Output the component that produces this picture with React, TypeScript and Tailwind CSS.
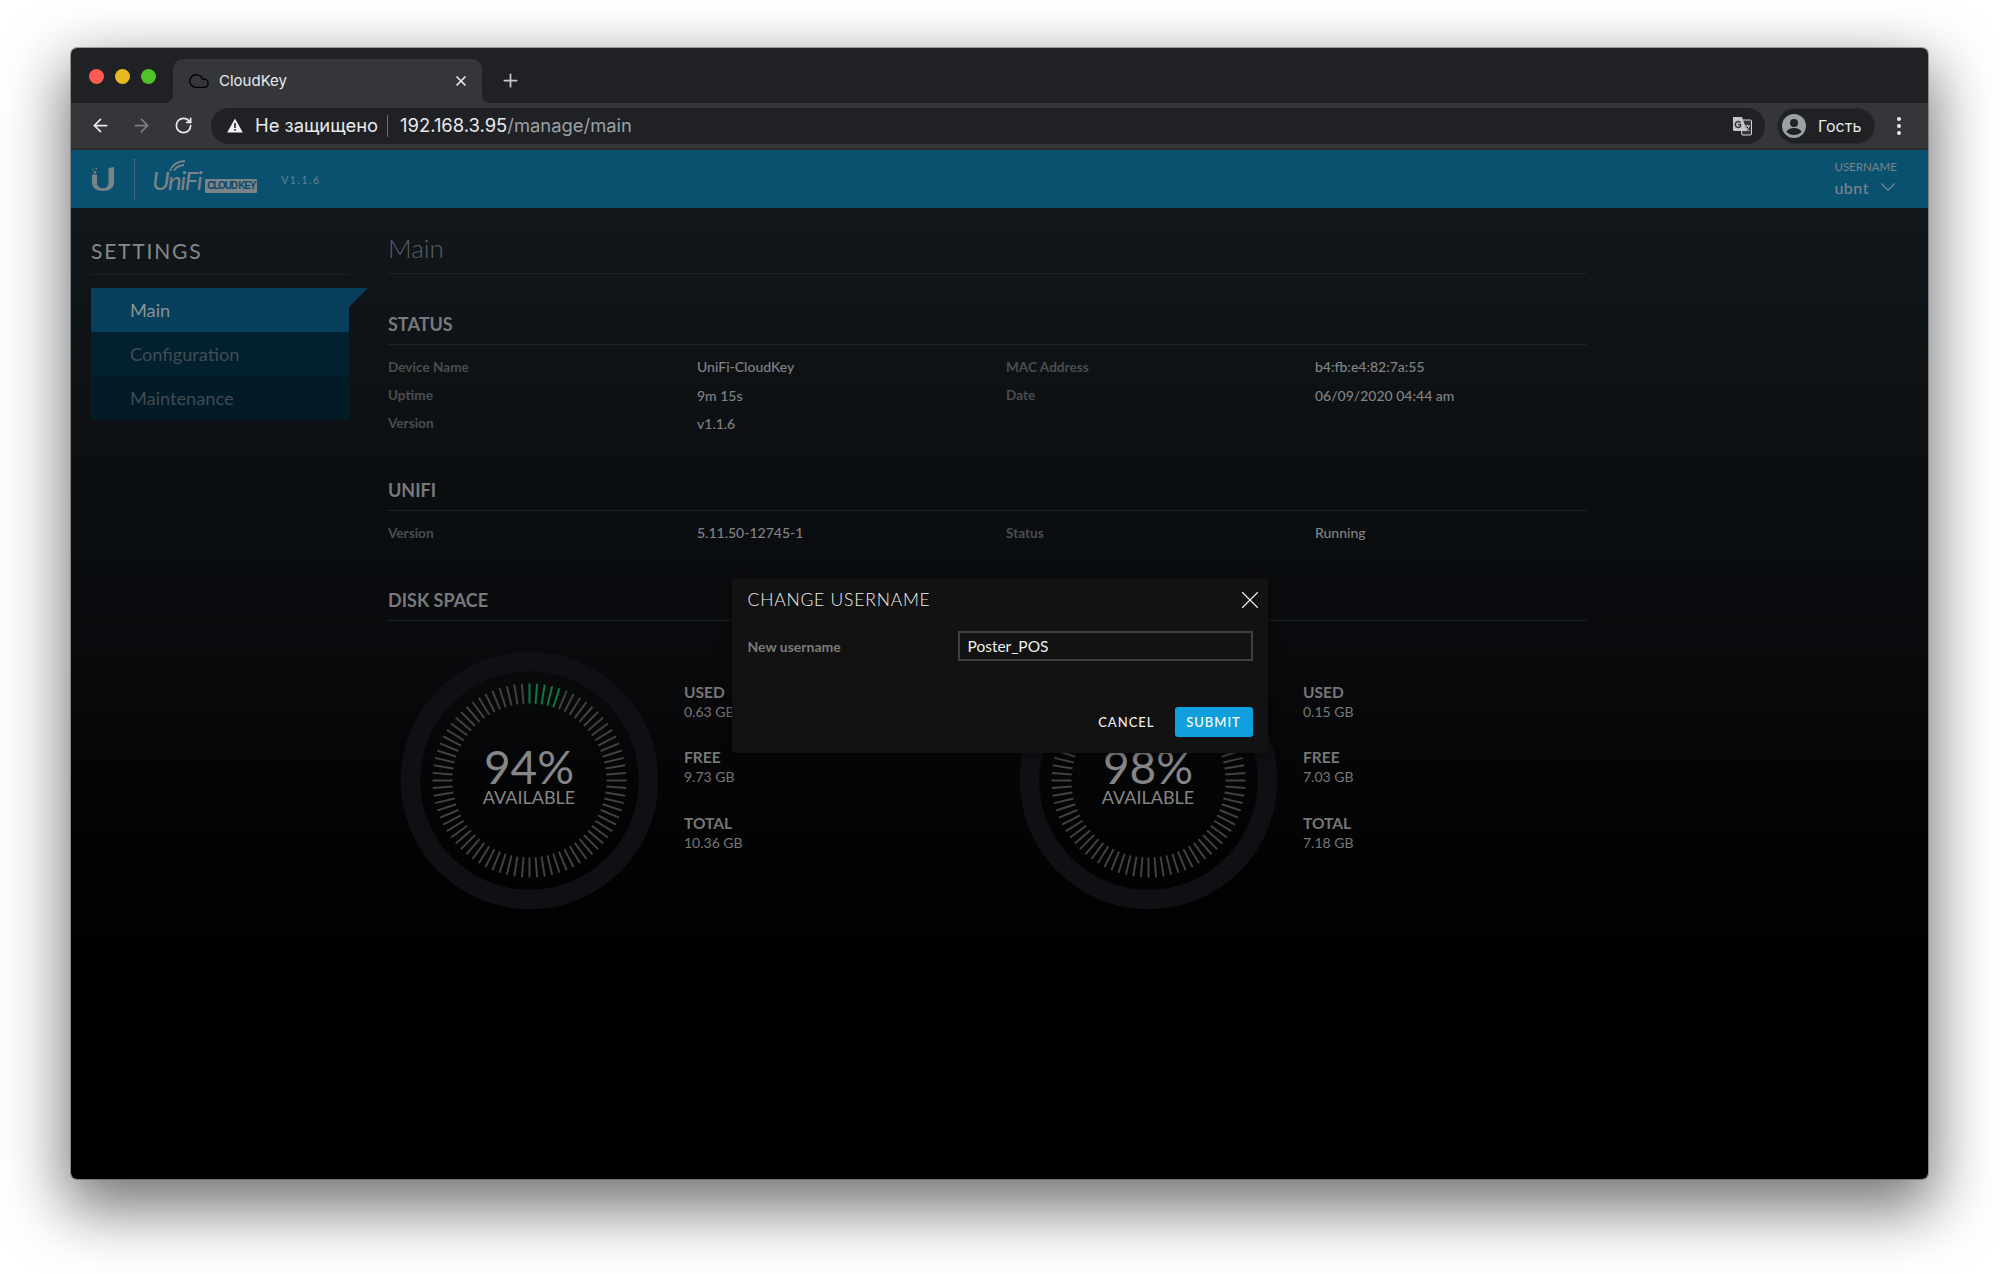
import { ArrowLeft, ArrowRight, ChevronDown, Cloud, Plus, RotateCw, X } from "lucide-react";

const ui = { fontFamily: 'Inter, "Noto Sans", sans-serif' };
const lato = { fontFamily: 'Lato, "Open Sans", sans-serif' };

function Gauge({ percent, green, used, free, total }: { percent: number; green: number; used: string; free: string; total: string }) {
  const ticks = Array.from({ length: 80 }, (_, i) => i);
  return (
    <div className="flex w-[619px] pl-[12.5px]">
      <div className="relative h-[257px] w-[257px] shrink-0">
        <svg viewBox="0 0 257 257" className="h-full w-full">
          <circle cx="128.5" cy="128.5" r="119" fill="none" stroke="#0e1013" strokeWidth="19.5" />
          {ticks.map((i) => (
            <line
              key={i}
              x1="128.5"
              y1="31.5"
              x2="128.5"
              y2="51.5"
              stroke={i < green ? "#0c7a45" : "#414244"}
              strokeWidth="2"
              transform={`rotate(${i * 4.5} 128.5 128.5)`}
            />
          ))}
        </svg>
        <div className="absolute inset-0 flex flex-col items-center justify-center pb-[10px] text-[#858687]">
          <div className="text-[46px] leading-[42px]">{percent}%</div>
          <div className="text-[18px] leading-[18px]">AVAILABLE</div>
        </div>
      </div>
      <div className="ml-[26.5px] flex flex-col gap-[26.5px] pt-[30.5px] text-[#767778]">
        <Stat label="USED" value={used} />
        <Stat label="FREE" value={free} />
        <Stat label="TOTAL" value={total} />
      </div>
    </div>
  );
}

function Stat({ label, value }: { label: string; value: string }) {
  return (
    <div>
      <div className="text-[15.5px] font-bold leading-[18px]">{label}</div>
      <div className="text-[14px] leading-[21px]">{value}</div>
    </div>
  );
}

function Row({ items }: { items: string[] }) {
  return (
    <div className="grid h-[28.4px] w-[1236px] grid-cols-4 items-center">
      {items.map((t, i) => (
        <div key={i} className={i % 2 === 0 ? "text-[13.6px] font-bold text-[#4a4d50]" : "text-[14px] font-medium text-[#808285]"}>
          {t}
        </div>
      ))}
    </div>
  );
}

function SectionTitle({ title, className }: { title: string; className: string }) {
  return (
    <div className={`border-b border-[#1c2226] pb-[8px] text-[18px] font-bold leading-[24px] text-[#77797b] ${className}`}>
      {title}
    </div>
  );
}

function ULogo() {
  return (
    <svg width="24" height="26" viewBox="0 0 26 26" fill="#7a8488">
      <path d="M1 8h5.500v9c0 4 3 6 6.500 6v3C6 26 1 22.500 1 16.500z" />
      <path d="M19 1l6-1v16.500C25 22.500 20 26 13 26v-3c3.500 0 6-2 6-6z" />
      <rect x="3" y="4.500" width="2.500" height="2.500" />
      <rect x="1" y="2" width="1.500" height="1.500" />
      <rect x="5" y="1" width="1.500" height="1.500" />
    </svg>
  );
}

function TranslateIcon() {
  return (
    <svg width="20" height="20" viewBox="0 0 20 20">
      <path d="M8 4h10.500a1 1 0 0 1 1 1v13a1 1 0 0 1-1 1H10z" fill="#35363a" stroke="#d5d6d7" />
      <path d="M1 1h9l5 14H2a1 1 0 0 1-1-1z" fill="#c4c5c7" />
      <path d="M8.500 6.500A3 3 0 1 0 8.500 10.500V8.500H6" fill="none" stroke="#35363a" strokeWidth="1.500" />
      <path d="M13 10h5M15.500 9v1M17 10c-.5 2-2 4-3.500 5M14 11.500c.5 1.500 2 3 3.500 3.500" fill="none" stroke="#d5d6d7" />
    </svg>
  );
}

function WarnIcon() {
  return (
    <svg width="16" height="15" viewBox="0 0 16 15">
      <path d="M8 0.500L15.800 14.500H0.200z" fill="#f1f3f4" />
      <rect x="7.200" y="5" width="1.600" height="5" fill="#202124" />
      <rect x="7.200" y="11" width="1.600" height="1.700" fill="#202124" />
    </svg>
  );
}

export default function App() {
  return (
    <div className="h-[1274px] w-[2000px] overflow-hidden bg-white pl-[71px] pt-[48px]">
      <div className="flex h-[1131px] w-[1857px] flex-col overflow-hidden rounded-[6px]" style={{ boxShadow: "0 0 0 1px rgba(85,85,88,0.5), 0 24px 62px 6px rgba(0,0,0,0.55)" }}>
        {/* tab strip */}
        <div className="flex h-[55px] shrink-0 items-end bg-[#202124] pl-[18px]" style={ui}>
          <div className="flex h-[55px] items-center gap-[11px] pt-[2px]">
            <span className="h-[15px] w-[15px] rounded-full bg-[#fb5b52]" />
            <span className="h-[15px] w-[15px] rounded-full bg-[#e6bb22]" />
            <span className="h-[15px] w-[15px] rounded-full bg-[#52c22b]" />
          </div>
          <div className="relative ml-[17px] flex h-[44px] w-[309px] items-center rounded-t-[10px] bg-[#35363a] pl-[15px] pr-[13px] text-[15px] text-[#e8eaed]">
            <span className="absolute -left-[8px] bottom-0 h-[8px] w-[8px] bg-[#35363a]">
              <span className="block h-full w-full rounded-br-[8px] bg-[#202124]" />
            </span>
            <span className="absolute -right-[8px] bottom-0 h-[8px] w-[8px] bg-[#35363a]">
              <span className="block h-full w-full rounded-bl-[8px] bg-[#202124]" />
            </span>
            <Cloud size={22} strokeWidth={1.5} className="text-black" />
            <span className="ml-[9px] flex-1">CloudKey</span>
            <X size={16} strokeWidth={2.5} className="text-[#e8eaed]" />
          </div>
          <Plus size={21} strokeWidth={2} className="mb-[12px] ml-[18px] text-[#c6c8cb]" />
        </div>
        {/* toolbar */}
        <div className="flex h-[47px] shrink-0 items-center border-b-2 border-[#2a2b2e] bg-[#35363a] pl-[19px] pr-[27px]" style={ui}>
          <ArrowLeft size={21} strokeWidth={2} className="text-[#e8eaed]" />
          <ArrowRight size={21} strokeWidth={2} className="ml-[20px] text-[#7d7f82]" />
          <RotateCw size={19} strokeWidth={2.2} className="ml-[22px] text-[#e8eaed]" />
          <div className="ml-[18px] flex h-[36px] flex-1 items-center rounded-full bg-[#202124] pl-[16px] pr-[13px] text-[18.4px]">
            <WarnIcon />
            <span className="ml-[12px] pt-[1px] text-[#e8eaed]">Не защищено</span>
            <span className="ml-[9px] h-[22px] w-px bg-[#6a6b6e]" />
            <span className="ml-[12px] pt-[1px] text-[#e8eaed]">192.168.3.95</span>
            <span className="pt-[1px] text-[#9aa0a6]">/manage/main</span>
            <span className="ml-auto">
              <TranslateIcon />
            </span>
          </div>
          <div className="ml-[12px] flex h-[36px] w-[98px] items-center rounded-full border border-[#2b2c30] bg-[#202124] pl-[4px] text-[16px] text-[#e8eaed]">
            <svg width="24" height="24" viewBox="0 0 24 24">
              <circle cx="12" cy="12" r="12" fill="#9aa0a6" />
              <circle cx="12" cy="9" r="4" fill="#202124" />
              <path d="M4.500 18c1-3 4.500-4 7.500-4s6.500 1 7.500 4c-2 2-4.500 3-7.500 3s-5.500-1-7.500-3z" fill="#202124" />
            </svg>
            <span className="ml-[12px]">Гость</span>
          </div>
          <div className="ml-[22px] flex flex-col gap-[3px]">
            <span className="h-[4px] w-[4px] rounded-full bg-[#e8eaed]" />
            <span className="h-[4px] w-[4px] rounded-full bg-[#e8eaed]" />
            <span className="h-[4px] w-[4px] rounded-full bg-[#e8eaed]" />
          </div>
        </div>
        {/* unifi header */}
        <div className="flex h-[58px] shrink-0 items-center bg-[#0a5170] pl-[20px] pr-[27px] text-[#7a8488]" style={lato}>
          <ULogo />
          <span className="ml-[19px] h-[40px] border-l border-dotted border-[#5f7d8c]" />
          <div className="relative ml-[17px] flex items-end pt-[2px]">
            <span className="text-[26px] italic leading-[28px] tracking-[-1.5px]">UniFi</span>
            <svg width="18" height="12" viewBox="0 0 18 12" className="absolute left-[17px] top-[-4px]" fill="none" stroke="#7a8488" strokeWidth="1.800">
              <path d="M1 11C3 5 8 1.500 16 1" />
              <path d="M5 11c1.500-3.500 4-5.500 10-6" />
            </svg>
            <span className="mb-[1px] ml-[4px] rounded-[1px] bg-[#7a8488] px-[2px] text-[10px] font-bold leading-[14px] tracking-[-1.2px] text-[#0a4a66]" style={{ fontFamily: '"Liberation Sans", sans-serif' }}>
              CLOUD KEY
            </span>
          </div>
          <span className="ml-[24px] pt-[3px] text-[10.5px] tracking-[1.5px] text-[#648091]">V1.1.6</span>
          <div className="ml-auto flex flex-col pt-[1px]">
            <span className="text-[11.5px] leading-[15px]">USERNAME</span>
            <span className="flex items-center text-[16px] font-medium leading-[21px] tracking-[0.5px]">
              ubnt
              <ChevronDown size={26} strokeWidth={1} className="ml-[6px]" />
            </span>
          </div>
        </div>
        {/* page */}
        <div className="relative flex flex-1 bg-gradient-to-b from-[#11171b] via-[#08090b] to-black pl-[20px]" style={lato}>
          <aside className="w-[258px] shrink-0">
            <div className="border-b border-[#1c2226] pb-[7px] pt-[27px] text-[21px] leading-[32px] tracking-[1.8px] text-[#86888a]">SETTINGS</div>
            <div className="relative mt-[13px] text-[18.2px]">
              <div className="flex h-[44px] items-center bg-[#073f5c] pl-[39px] pt-[2px] text-[#8b9397]">Main</div>
              <div className="flex h-[44px] items-center bg-[#03202f] pl-[39px] pt-[2px] text-[#404c52]">Configuration</div>
              <div className="flex h-[44px] items-center bg-[#031a27] pl-[39px] pt-[2px] text-[#404c52]">Maintenance</div>
              <svg width="19" height="19" viewBox="0 0 19 19" className="absolute left-full top-0">
                <path d="M0 0h19L0 19z" fill="#073f5c" />
              </svg>
            </div>
          </aside>
          <main className="ml-[39px] w-[1199px]">
            <div className="border-b border-[#1c2226] pb-[8px] pt-[23px] text-[26px] font-light leading-[34px] text-[#5a5e61]">Main</div>
            <SectionTitle title="STATUS" className="mt-[38px]" />
            <div className="pt-[7.5px]">
              <Row items={["Device Name", "UniFi-CloudKey", "MAC Address", "b4:fb:e4:82:7a:55"]} />
              <Row items={["Uptime", "9m 15s", "Date", "06/09/2020 04:44 am"]} />
              <Row items={["Version", "v1.1.6", "", ""]} />
            </div>
            <SectionTitle title="UNIFI" className="mt-[40.5px]" />
            <div className="pt-[7.5px]">
              <Row items={["Version", "5.11.50-12745-1", "Status", "Running"]} />
            </div>
            <SectionTitle title="DISK SPACE" className="mt-[40.5px]" />
            <div className="flex w-[1238px] pt-[31.5px]">
              <Gauge percent={94} green={5} used="0.63 GB" free="9.73 GB" total="10.36 GB" />
              <Gauge percent={98} green={2} used="0.15 GB" free="7.03 GB" total="7.18 GB" />
            </div>
          </main>
          {/* change username dialog */}
          <div className="absolute left-[661px] top-[370px] h-[175px] w-[536px] rounded-[3px] bg-[#121212] px-[15.5px] shadow-[0_0_12px_rgba(0,0,0,0.5)]">
            <div className="flex h-[43px] items-center justify-between pt-[1px]">
              <span className="text-[17.5px] font-light tracking-[0.8px] text-[#f0f0f0]">CHANGE USERNAME</span>
              <X size={30} strokeWidth={0.9} className="mr-[-12.5px] text-[#f0f0f0]" />
            </div>
            <div className="mt-[10px] flex h-[30px] items-center">
              <span className="w-[210px] text-[14px] font-bold text-[#7a7b7c]">New username</span>
              <div className="flex h-[30px] w-[295px] items-center border-2 border-[#3a4044] pl-[8px] pt-[1px] text-[15.5px] text-[#f0f0f0]">Poster_POS</div>
            </div>
            <div className="mt-[46px] flex items-center justify-end">
              <span className="pt-[2px] text-[13px] font-medium tracking-[1px] text-[#eeeeee]">CANCEL</span>
              <span className="ml-[20px] flex h-[30px] w-[78px] items-center justify-center rounded-[3px] bg-[#0f9fdc] pt-[1px] text-[13px] font-medium tracking-[1px] text-white">SUBMIT</span>
            </div>
          </div>
        </div>
      </div>
    </div>
  );
}
